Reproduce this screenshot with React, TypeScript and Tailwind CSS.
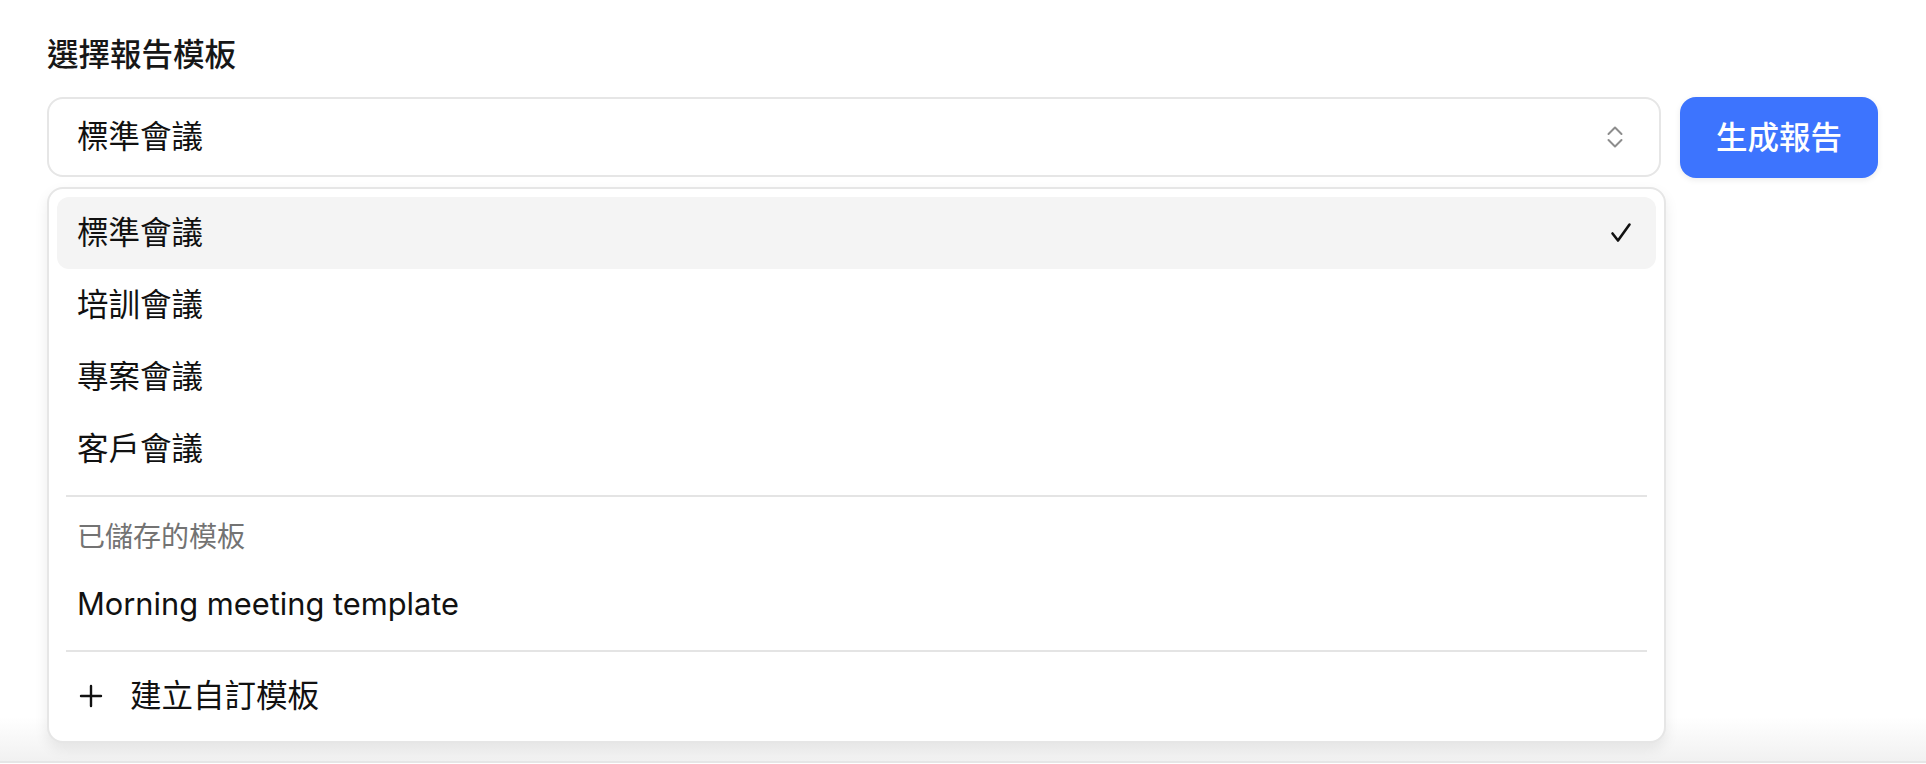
import React from 'react';

const cjk = '"Inter", "Noto Sans CJK TC", sans-serif';

const templates = ['標準會議', '培訓會議', '專案會議', '客戶會議'];

const CheckMark = () => (
  <svg width="22" height="22" viewBox="0 0 22 22" fill="none">
    <polyline points="2.5,11.5 8,18.5 19.5,2.5" stroke="#111" strokeWidth="2.6" strokeLinecap="round" strokeLinejoin="round" />
  </svg>
);

const UpDown = () => (
  <svg width="16" height="22" viewBox="0 0 16 22" fill="none">
    <polyline points="1.5,8 8,1.5 14.5,8" stroke="#8d8d8d" strokeWidth="2" strokeLinecap="round" strokeLinejoin="round" />
    <polyline points="1.5,14 8,20.5 14.5,14" stroke="#8d8d8d" strokeWidth="2" strokeLinecap="round" strokeLinejoin="round" />
  </svg>
);

const PlusIcon = () => (
  <svg width="24" height="24" viewBox="0 0 24 24" fill="none">
    <path d="M2 12h20M12 2v20" stroke="#111" strokeWidth="2.4" strokeLinecap="round" />
  </svg>
);

const App: React.FC = () => {
  const selected = templates[0];

  return (
    <div className="w-full h-[764px] bg-white flex flex-col" style={{ fontFamily: cjk }}>
      <div className="px-[47px] pr-[48px] pt-[35px]">
        <h2 className="text-[31.5px] leading-[40px] font-medium text-[#171717] mb-[22px]">選擇報告模板</h2>

        <div className="flex items-start gap-[19px]">
          <div className="relative flex-1">
            {/* select trigger */}
            <button
              type="button"
              className="w-full h-[80px] flex items-center justify-between rounded-[16px] border-2 border-[#e6e6e6] bg-white pl-[28px] pr-[36px] text-left"
            >
              <span className="text-[31.5px] leading-[40px] text-[#111]">{selected}</span>
              <UpDown />
            </button>

            {/* open dropdown */}
            <div className="absolute left-0 top-[90px] w-[calc(100%+5px)] rounded-[16px] border-2 border-[#e6e6e6] bg-white px-[8px] pt-[8px] pb-[9px] shadow-[0_6px_14px_rgba(0,0,0,0.08)] z-10">
              {templates.map((t) => (
                <div
                  key={t}
                  className={`h-[72px] flex items-center justify-between rounded-[12px] pl-[20px] pr-[24px] ${
                    t === selected ? 'bg-[#f4f4f4]' : ''
                  }`}
                >
                  <span className="text-[31.5px] leading-[40px] text-[#111]">{t}</span>
                  {t === selected && <CheckMark />}
                </div>
              ))}

              <div className="mx-[9px] mt-[10px] h-[2px] bg-[#e4e4e4]" />

              <div className="pl-[20px] pt-[20px] pb-[11px] text-[28px] leading-[40px] text-[#737373]">已儲存的模板</div>

              <div className="h-[72px] flex items-center pl-[20px]">
                <span className="text-[30.8px] leading-[40px] text-[#111]">Morning meeting template</span>
              </div>

              <div className="mx-[9px] mt-[10px] mb-[8px] h-[2px] bg-[#e4e4e4]" />

              <div className="h-[72px] flex items-center gap-[27px] pl-[22px]">
                <PlusIcon />
                <span className="text-[31.5px] leading-[40px] text-[#111]">建立自訂模板</span>
              </div>
            </div>
          </div>

          <button
            type="button"
            className="w-[198px] h-[81px] rounded-[16px] bg-[#3d74fe] text-white text-[31.5px] leading-[40px] font-medium shadow-[0_2px_6px_rgba(0,0,0,0.08)]"
          >
            生成報告
          </button>
        </div>
      </div>

      <div className="mt-auto h-[46px] bg-gradient-to-b from-white to-[#f1f1f1] border-b-2 border-[#e6e6e6]" />
      <div className="h-[1px] bg-white" />
    </div>
  );
};

export default App;
